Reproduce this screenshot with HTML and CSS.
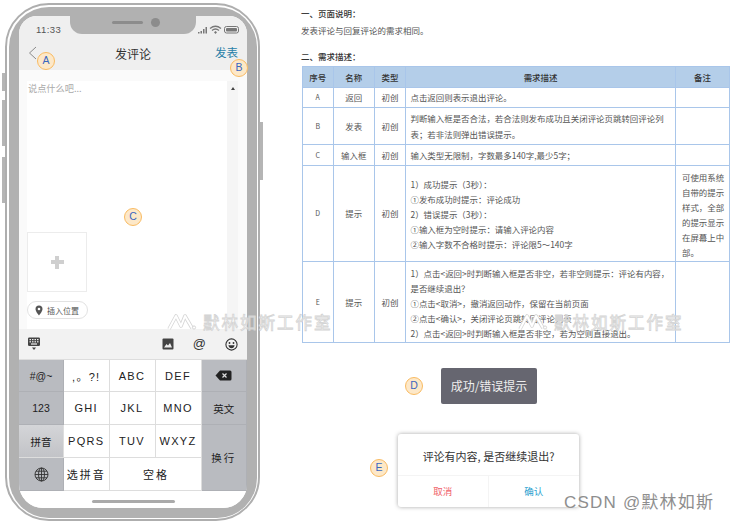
FILE: index.html
```html
<!DOCTYPE html>
<html lang="zh-CN">
<head>
  <meta charset="UTF-8" />
  <title>发评论 需求说明</title>
  <link rel="stylesheet" href="styles.css">
</head>
<body>
  <div class="page">
    <div class="phone">
      <span class="side-btn btn-l1"></span>
      <span class="side-btn btn-l2"></span>
      <span class="side-btn btn-l3"></span>
      <span class="side-btn btn-r1"></span>
      <div class="bezel">
        <div class="screen">
          <div class="notch"><span class="speaker"></span><span class="camera"></span></div>
          <div class="status">
            <span class="time">11:33</span>
            <svg class="status-icons" width="42" height="10" viewBox="0 0 42 10">
              <g fill="#777">
                <rect x="0" y="7" width="1.5" height="1.5"/><rect x="2.5" y="6" width="1.5" height="2.5"/><rect x="5" y="4" width="1.5" height="4.5"/><rect x="7.5" y="2" width="1.5" height="6.5"/>
              </g>
              <path d="M12 3.5Q17.5-1 23 3.5M14 5.5Q17.5 2.5 21 5.5" fill="none" stroke="#777" stroke-width="1.3"/>
              <path d="M16 7.2L17.5 6L19 7.2L17.5 9z" fill="#777"/>
              <rect x="26.5" y="1.5" width="14" height="6.5" rx="2" fill="none" stroke="#777"/>
              <rect x="28" y="3" width="11" height="3.5" rx="1" fill="#777"/>
            </svg>
          </div>
          <div class="nav">
            <svg class="back" width="9" height="14" viewBox="0 0 9 14"><path d="M8 1L1.5 7L8 13" fill="none" stroke="#8a8a8a"/></svg>
            <span class="nav-title">发评论</span>
            <span class="nav-send">发表</span>
          </div>
          <div class="compose">
            <div class="editor">
              <div class="placeholder">说点什么吧...</div>
              <div class="add-photo"><span class="plus"></span></div>
              <div class="location">
                <svg width="8" height="11" viewBox="0 0 8 11"><path d="M4 0.5a3.5 3.5 0 0 1 3.5 3.5C7.5 6.5 4 10.5 4 10.5S0.5 6.5 0.5 4A3.5 3.5 0 0 1 4 0.5z" fill="#555"/><circle cx="4" cy="4" r="1.3" fill="#fff"/></svg>
                <span>插入位置</span>
              </div>
            </div>
            <div class="scroll"><span class="scroll-arrow"></span></div>
          </div>
          <div class="toolbar">
            <svg width="14" height="14" viewBox="0 0 14 14"><rect x="1" y="0.5" width="12" height="8.5" rx="1.2" fill="#444"/><g fill="#eee"><rect x="2.5" y="2" width="1.5" height="1.2"/><rect x="5" y="2" width="1.5" height="1.2"/><rect x="7.5" y="2" width="1.5" height="1.2"/><rect x="10" y="2" width="1.5" height="1.2"/><rect x="2.5" y="4.2" width="1.5" height="1.2"/><rect x="5" y="4.2" width="1.5" height="1.2"/><rect x="7.5" y="4.2" width="1.5" height="1.2"/><rect x="10" y="4.2" width="1.5" height="1.2"/><rect x="4" y="6.4" width="6" height="1.2"/></g><path d="M5 10.5h4L7 13z" fill="#444"/></svg>
            <span class="tool-gap"></span>
            <svg width="12" height="12" viewBox="0 0 12 12"><rect x="0.5" y="0.5" width="11" height="11" rx="1" fill="#444"/><path d="M2 9.5L4.5 6L6 7.5L8 5L10 9.5z" fill="#eee"/></svg>
            <span class="tool-at">@</span>
            <svg width="13" height="13" viewBox="0 0 13 13"><circle cx="6.5" cy="6.5" r="5.6" fill="none" stroke="#333" stroke-width="1.1"/><circle cx="4.5" cy="5" r="0.9" fill="#333"/><circle cx="8.5" cy="5" r="0.9" fill="#333"/><path d="M3.4 7.3h6.2Q9 10.2 6.5 10.2T3.4 7.3z" fill="#333"/></svg>
          </div>
          <div class="keyboard">
            <div class="key dark">#@~</div>
            <div class="key">,。?!</div>
            <div class="key">ABC</div>
            <div class="key">DEF</div>
            <div class="key dark">
              <svg width="17" height="11" viewBox="0 0 17 11"><path d="M5 0.5H15a1.5 1.5 0 0 1 1.5 1.5V9A1.5 1.5 0 0 1 15 10.5H5L0.5 5.5z" fill="#222"/><path d="M7.5 3.5L11.5 7.5M11.5 3.5L7.5 7.5" stroke="#ddd" stroke-width="1.2"/></svg>
            </div>
            <div class="key dark">123</div>
            <div class="key">GHI</div>
            <div class="key">JKL</div>
            <div class="key">MNO</div>
            <div class="key dark">英文</div>
            <div class="key active">拼音</div>
            <div class="key">PQRS</div>
            <div class="key">TUV</div>
            <div class="key">WXYZ</div>
            <div class="key dark tall">换行</div>
            <div class="key dark">
              <svg width="15" height="15" viewBox="0 0 15 15" fill="none" stroke="#333" stroke-width="0.9"><circle cx="7.5" cy="7.5" r="6.5"/><ellipse cx="7.5" cy="7.5" rx="3" ry="6.5"/><path d="M7.5 1v13M1 7.5h13M2 4.2h11M2 10.8h11"/></svg>
            </div>
            <div class="key wide-text">选拼音</div>
            <div class="key space wide-text">空格</div>
          </div>
          <div class="home"><span class="home-bar"></span></div>
        </div>
      </div>
    </div>

    <div class="spec">
      <h3 class="spec-title">一、页面说明：</h3>
      <p class="spec-text">发表评论与回复评论的需求相同。</p>
      <h3 class="spec-title second">二、需求描述：</h3>
      <table class="req">
        <colgroup>
          <col class="c1"><col class="c2"><col class="c3"><col class="c4"><col class="c5">
        </colgroup>
        <tr class="r-head"><th>序号</th><th>名称</th><th>类型</th><th>需求描述</th><th>备注</th></tr>
        <tr class="r-a"><td class="mid letter">A</td><td class="mid">返回</td><td class="mid">初创</td><td>点击返回则表示退出评论。</td><td></td></tr>
        <tr class="r-b"><td class="mid letter">B</td><td class="mid">发表</td><td class="mid">初创</td><td>判断输入框是否合法，若合法则发布成功且关闭评论页跳转回评论列<br>表；若非法则弹出错误提示。</td><td></td></tr>
        <tr class="r-c"><td class="mid letter">C</td><td class="mid">输入框</td><td class="mid">初创</td><td>输入类型无限制，字数最多140字,最少5字；</td><td></td></tr>
        <tr class="r-d"><td class="mid letter">D</td><td class="mid">提示</td><td class="mid">初创</td>
          <td>1）成功提示（3秒）：<br>①发布成功时提示：评论成功<br>2）错误提示（3秒）：<br>①输入框为空时提示：请输入评论内容<br>②输入字数不合格时提示：评论限5～140字</td>
          <td>可使用系统<br>自带的提示<br>样式，全部<br>的提示显示<br>在屏幕上中<br>部。</td></tr>
        <tr class="r-e"><td class="mid letter">E</td><td class="mid">提示</td><td class="mid">初创</td>
          <td>1）点击&lt;返回&gt;时判断输入框是否非空，若非空则提示：评论有内容，<br>是否继续退出？<br>①点击&lt;取消&gt;，撤消返回动作，保留在当前页面<br>②点击&lt;确认&gt;，关闭评论页跳转回评论列表<br>2）点击&lt;返回&gt;时判断输入框是否非空，若为空则直接退出。</td><td></td></tr>
      </table>

      <div class="toast">成功/错误提示</div>
      <div class="dialog">
        <div class="dialog-msg">评论有内容, 是否继续退出?</div>
        <div class="dialog-btns">
          <span class="cancel">取消</span>
          <span class="ok">确认</span>
        </div>
      </div>
    </div>
  </div>

  <!-- callouts and watermarks sit over the content -->
  <span class="tag tag-a">A</span>
  <span class="tag tag-b">B</span>
  <span class="tag tag-c">C</span>
  <span class="tag tag-d">D</span>
  <span class="tag tag-e">E</span>
  <div class="wm wm-1">
    <svg width="30" height="18" viewBox="0 0 30 18" fill="none" stroke-linejoin="round"><path d="M2 16L9 3L14 13L18 3L25 15" stroke="#d6d6d6" stroke-width="3.6"/><path d="M2 16L9 3L14 13L18 3L25 15" stroke="#fff" stroke-width="2"/><circle cx="27" cy="14.5" r="1.6" stroke="#d6d6d6"/></svg>
    <span>默林如斯工作室</span>
  </div>
  <div class="wm wm-2">
    <svg width="30" height="18" viewBox="0 0 30 18" fill="none" stroke-linejoin="round"><path d="M2 16L9 3L14 13L18 3L25 15" stroke="#d6d6d6" stroke-width="3.6"/><path d="M2 16L9 3L14 13L18 3L25 15" stroke="#fff" stroke-width="2"/><circle cx="27" cy="14.5" r="1.6" stroke="#d6d6d6"/></svg>
    <span>默林如斯工作室</span>
  </div>
  <div class="csdn">CSDN @默林如斯</div>
</body>
</html>
```

FILE: styles.css
```css
html, body {
  margin: 0;
  padding: 0;
  background: #fff;
}
body {
  width: 730px;
  height: 522px;
  overflow: hidden;
  position: relative;
  font-family: "Noto Sans CJK SC", "Liberation Sans", sans-serif;
  color: #333;
}
.page {
  display: flex;
  align-items: flex-start;
}

/* phone */
.phone {
  position: relative;
  width: 255px;
  height: 518px;
  margin: 3px 0 0 5px;
  box-sizing: border-box;
  border: 2px solid #aeaeae;
  border-radius: 44px;
  padding: 1.5px;
  background: #fff;
  flex: none;
}
.side-btn {
  position: absolute;
  width: 3px;
  background: #b5b5b5;
}
.btn-l1 { left: -5px; top: 68px; height: 18px; }
.btn-l2 { left: -5px; top: 95px; height: 46px; }
.btn-l3 { left: -5px; top: 152px; height: 46px; }
.btn-r1 { right: -5px; top: 117px; height: 58px; }
.bezel {
  height: 100%;
  box-sizing: border-box;
  background: #b1b1b1;
  border-radius: 40px;
  padding: 9.5px 9.5px 9.5px 10.5px;
}
.screen {
  position: relative;
  height: 100%;
  background: #fff;
  border-radius: 18px 18px 24px 24px;
  overflow: hidden;
  display: flex;
  flex-direction: column;
}
.notch {
  position: absolute;
  left: 51px;
  top: 0;
  width: 126px;
  height: 18px;
  background: #b1b1b1;
  border-radius: 0 0 12px 12px;
  display: flex;
  align-items: center;
  justify-content: center;
  gap: 8px;
  padding-bottom: 6px;
  box-sizing: border-box;
}
.speaker {
  width: 31px;
  height: 3px;
  margin-left: 5px;
  border-radius: 2px;
  background: #8c8c8c;
}
.camera {
  width: 9px;
  height: 9px;
  border-radius: 50%;
  background: #8c8c8c;
}
.status {
  height: 22px;
  background: #efefef;
  display: flex;
  justify-content: space-between;
  align-items: flex-end;
  padding: 0 7px 0 17px;
  flex: none;
}
.time {
  font-family: "Liberation Sans", sans-serif;
  font-size: 9.5px;
  line-height: 13px;
  letter-spacing: 0.4px;
  color: #555;
  margin-bottom: 2px;
}
.status-icons { margin-bottom: 3px; }
.nav {
  position: relative;
  height: 32px;
  box-sizing: border-box;
  padding-bottom: 2px;
  background: #efefef;
  flex: none;
  display: flex;
  align-items: center;
  justify-content: center;
}
.back {
  position: absolute;
  left: 9px;
  top: 8px;
}
.nav-title {
  font-size: 12px;
  color: #333;
}
.nav-send {
  position: absolute;
  right: 9px;
  top: 6px;
  font-size: 11.5px;
  line-height: 16px;
  color: #2a7fa8;
}
.compose {
  height: 259px;
  flex: none;
  display: flex;
  background: #fafafa;
  padding: 11px 9px 0 8px;
  box-sizing: border-box;
}
.editor {
  width: 200px;
  background: #fff;
  padding-top: 1px;
  box-sizing: border-box;
}
.placeholder {
  font-size: 9.2px;
  line-height: 12px;
  color: #aaa;
  margin-left: 1px;
}
.add-photo {
  width: 60px;
  height: 60px;
  box-sizing: border-box;
  border: 1px solid #ececec;
  margin-top: 138px;
  display: flex;
  align-items: center;
  justify-content: center;
}
.plus {
  position: relative;
  width: 13px;
  height: 4px;
  background: #cfcfcf;
}
.plus::after {
  content: "";
  position: absolute;
  left: 4.5px;
  top: -4.5px;
  width: 4px;
  height: 13px;
  background: #cfcfcf;
}
.location {
  width: 61px;
  height: 18px;
  box-sizing: border-box;
  border: 1px solid #e2e2e2;
  border-radius: 9px;
  margin-top: 9px;
  display: flex;
  align-items: center;
  gap: 4px;
  padding-left: 7px;
  font-size: 8px;
  color: #555;
}
.scroll {
  width: 11px;
  background: #f5f5f5;
  display: flex;
  justify-content: center;
}
.scroll-arrow {
  margin-top: 6px;
  width: 0;
  height: 0;
  border-left: 2.5px solid transparent;
  border-right: 2.5px solid transparent;
  border-bottom: 3px solid #444;
}
.toolbar {
  height: 31px;
  background: #f2f2f2;
  border-bottom: 1px solid #ddd;
  box-sizing: border-box;
  flex: none;
  display: flex;
  align-items: center;
  gap: 19px;
  padding: 0 9px 0 8px;
}
.tool-gap { flex: 1; }
.tool-at {
  font-family: "Liberation Sans", sans-serif;
  font-size: 13px;
  line-height: 14px;
  color: #333;
}
.keyboard {
  flex: none;
  display: grid;
  grid-template-columns: 45px 45.5px 46px 46px 45.5px;
  grid-template-rows: 32px 33px 33px 33px;
  background: #d9d9d9;
}
.key {
  display: flex;
  align-items: center;
  justify-content: center;
  background: #fff;
  font-family: "Liberation Sans", "Noto Sans CJK SC", sans-serif;
  font-size: 11px;
  letter-spacing: 1.3px;
  color: #222;
  border-right: 1px solid #ddd;
  border-bottom: 1px solid #ddd;
  box-sizing: border-box;
}
.key.dark {
  background: #b9bbc0;
  border-color: #aeb0b5;
  letter-spacing: 0;
  font-size: 10.5px;
}
.key.active {
  background: linear-gradient(#d4d5d8, #c2c3c7);
  letter-spacing: 0;
  font-size: 10.5px;
}
.key.tall { grid-row: span 2; letter-spacing: 2px; }
.key.space { grid-column: span 2; letter-spacing: 2px; padding-left: 2px; }
.wide-text { letter-spacing: 2px; font-size: 11px; }
.home {
  flex: 1;
  background: #fff;
  display: flex;
  justify-content: center;
  padding-top: 9px;
}
.home-bar {
  width: 83px;
  height: 3px;
  background: #aaa;
  border-radius: 2px;
}

/* right column */
.spec {
  flex: none;
  width: 429px;
  margin-left: 41px;
  padding-top: 6px;
}
.spec-title {
  margin: 0;
  font-size: 8.5px;
  line-height: 14px;
  font-weight: 500;
  color: #333;
}
.spec-title.second { margin-top: 12px; }
.spec-text {
  margin: 3px 0 0;
  font-size: 8.5px;
  line-height: 14px;
  color: #555;
}
.req {
  margin: 3px 0 0 1px;
  width: 427px;
  border-collapse: collapse;
  table-layout: fixed;
  font-size: 8.45px;
  line-height: 15px;
  color: #555;
}
.req .c1 { width: 30.5px; }
.req .c2 { width: 41.5px; }
.req .c3 { width: 31px; }
.req .c4 { width: 270px; }
.req .c5 { width: 54px; }
.req th, .req td {
  border: 1px solid #a9c6ea;
  padding: 0 6px;
  overflow: hidden;
  white-space: nowrap;
}
.req td:nth-child(4), .req td:nth-child(5) { padding-left: 4.5px; padding-right: 0; }
.req td:nth-child(5) { padding-left: 6px; }
.req th {
  background: #b4cee9;
  font-weight: 500;
  color: #333;
  text-align: center;
}
.req td.mid {
  text-align: center;
  padding: 0;
}
.req td.letter { font-size: 7px; }
.r-head { height: 21px; }
.r-a { height: 20px; }
.r-b { height: 37px; line-height: 16px; }
.r-c { height: 21px; }
.r-d { height: 96px; }
.r-e { height: 81px; }
.r-d td, .r-e td { padding-top: 2px; }
.toast {
  width: 96px;
  height: 36px;
  margin: 25px 0 0 140px;
  background: #666670;
  border-radius: 2px;
  color: #eee;
  font-size: 12px;
  line-height: 36px;
  text-align: center;
}
.dialog {
  width: 181px;
  height: 73px;
  margin: 30px 0 0 97px;
  background: #fff;
  border-radius: 3px;
  box-shadow: 0 0 4px rgba(0, 0, 0, 0.35);
  display: flex;
  flex-direction: column;
}
.dialog-msg {
  height: 42px;
  line-height: 45px;
  text-align: center;
  font-size: 11px;
  color: #333;
  border-bottom: 1px solid #f4f4f4;
  box-sizing: border-box;
}
.dialog-btns {
  flex: 1;
  display: grid;
  grid-template-columns: 1fr 1fr;
  font-size: 9.5px;
  line-height: 31px;
  text-align: center;
}
.cancel { color: #f0606a; border-right: 1px solid #f4f4f4; }
.ok { color: #2a9fcf; }

/* overlays */
.tag {
  position: absolute;
  width: 18px;
  height: 18px;
  box-sizing: border-box;
  border: 1.5px solid #f9bb62;
  border-radius: 50%;
  background: #fde8c8;
  color: #3a66c0;
  font-family: "Liberation Sans", sans-serif;
  font-size: 10.5px;
  line-height: 15px;
  text-align: center;
}
.tag-a { left: 37px; top: 52px; }
.tag-b { left: 230px; top: 59px; }
.tag-c { left: 124px; top: 208px; }
.tag-d { left: 405px; top: 377px; }
.tag-e { left: 370px; top: 459px; }
.wm {
  position: absolute;
  display: flex;
  align-items: center;
  gap: 6px;
  font-size: 16.5px;
  line-height: 20px;
  letter-spacing: 2px;
  color: rgba(255, 255, 255, 0.6);
  -webkit-text-stroke: 0.8px #d4d4d4;
}
.wm-1 { left: 167px; top: 312px; }
.wm-2 { left: 518px; top: 312px; }
.csdn {
  position: absolute;
  left: 564px;
  top: 491px;
  font-family: "Liberation Sans", "Noto Sans CJK SC", sans-serif;
  font-size: 17px;
  line-height: 24px;
  letter-spacing: 1.2px;
  color: #8e8e8e;
  white-space: nowrap;
}
```
